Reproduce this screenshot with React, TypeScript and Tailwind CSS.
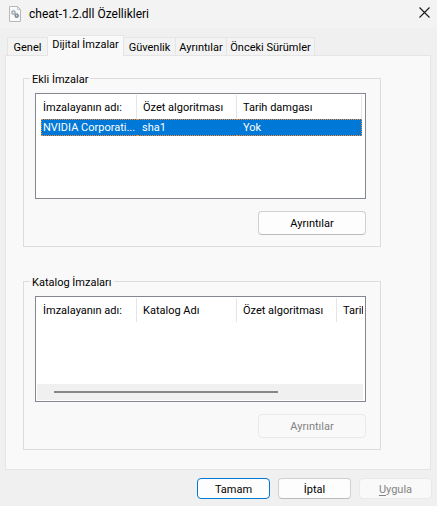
import { useState } from "react";

const tabs = ["Genel", "Dijital İmzalar", "Güvenlik", "Ayrıntılar", "Önceki Sürümler"];
const tabWidths = ["w-[41px]", "w-[76px]", "w-[52px]", "w-[51px]", "w-[88px]"];

const buttonBase =
  "flex items-center justify-center rounded border bg-[#fdfdfd] pt-[2px] border-[#d0d0d0] border-b-[#bcbcbc] disabled:bg-[#f9f9f9] disabled:border-[#e9e9e9] disabled:text-[#838383]";

function HeaderRow({ labels }: { labels: string[] }) {
  return (
    <thead>
      <tr className="h-6">
        {labels.map((label) => (
          <th
            key={label}
            scope="col"
            className="whitespace-nowrap border-r border-[#e5e5e5] p-0 pl-[6px] pt-[2px] text-left font-normal"
          >
            {label}
          </th>
        ))}
      </tr>
    </thead>
  );
}

function AttachedList() {
  return (
    <div className="mt-2 h-[106px] overflow-hidden border border-[#828790] bg-white p-px">
      <table className="w-[325px] table-fixed border-separate border-spacing-0">
        <colgroup>
          <col className="w-[100px]" />
          <col className="w-[100px]" />
          <col className="w-[125px]" />
        </colgroup>
        <HeaderRow labels={["İmzalayanın adı:", "Özet algoritması", "Tarih damgası"]} />
        <tbody className="text-white">
          <tr>
            <td className="p-0">
              <div className="ml-1 h-[17px] whitespace-nowrap border-y border-l border-dotted border-[#ff8728] bg-[#0078d7] pl-px leading-4">
                NVIDIA Corporati...
              </div>
            </td>
            <td className="p-0">
              <div className="h-[17px] border-y border-dotted border-[#ff8728] bg-[#0078d7] pl-[5px] leading-4">sha1</div>
            </td>
            <td className="p-0">
              <div className="h-[17px] border-y border-r border-dotted border-[#ff8728] bg-[#0078d7] pl-[6px] leading-4">
                Yok
              </div>
            </td>
          </tr>
        </tbody>
      </table>
    </div>
  );
}

function CatalogList() {
  return (
    <div className="mt-2 flex h-[106px] flex-col justify-between border border-[#828790] bg-white p-px pr-[2px]">
      <div className="overflow-hidden">
        <table className="w-[400px] table-fixed border-separate border-spacing-0">
          <HeaderRow labels={["İmzalayanın adı:", "Katalog Adı", "Özet algoritması", "Tarih damgası"]} />
        </table>
      </div>
      <div className="flex h-4 items-center bg-[#f0f0f0] pl-[17px]">
        <div className="h-[2px] w-[224px] bg-[#868686]" />
      </div>
    </div>
  );
}

function FileIcon() {
  return (
    <svg width="12" height="16" viewBox="0 0 12 16" fill="none" aria-hidden="true">
      <path d="M.5 .5H8.5L11.5 3.5V15.5H.5Z" fill="#fafafa" stroke="#b8b8b8" />
      <path d="M8.5 .5V3.5H11.5" stroke="#c4c4c4" />
      <circle cx="4.5" cy="6.5" r="1.5" stroke="#a3afb8" strokeWidth="1.6" />
      <circle cx="4.5" cy="6.5" r="2.3" stroke="#a3afb8" strokeWidth=".6" strokeDasharray="1 .8" />
      <circle cx="7.7" cy="9.7" r="1.4" stroke="#84909a" strokeWidth="1.6" />
      <circle cx="7.7" cy="9.7" r="2.1" stroke="#84909a" strokeWidth=".6" strokeDasharray="1 .8" />
    </svg>
  );
}

export default function App() {
  const [active, setActive] = useState(1);
  return (
    <main className="min-h-screen bg-[#f0f0f0] font-[Roboto,sans-serif] text-[11px] leading-[14px] text-black">
      <header className="flex h-7 items-center justify-between bg-[#f3f3f3] pl-[9px] pr-[7px]">
        <div className="flex items-center gap-2">
          <FileIcon />
          <h1 className="text-[12px] leading-4">cheat-1.2.dll Özellikleri</h1>
        </div>
        <button type="button" aria-label="Kapat" className="-mt-1">
          <svg width="11" height="11" viewBox="0 0 11 11" stroke="#1a1a1a" strokeWidth="1.1" aria-hidden="true">
            <path d="M.5 .5L10.5 10.5M10.5 .5L.5 10.5" />
          </svg>
        </button>
      </header>

      <div role="tablist" className="flex h-[27px] items-end pl-[7px]">
        {tabs.map((tab, i) => (
          <button
            key={tab}
            type="button"
            role="tab"
            aria-selected={i === active}
            onClick={() => setActive(i)}
            className={`${tabWidths[i]} shrink-0 whitespace-nowrap border-r border-t border-[#e5e5e5] ${
              i === active ? "relative -mb-px h-[21px] bg-[#f9f9f9] pb-[2px]" : "h-[18px] bg-[#f3f3f3] pt-[2px]"
            } ${i === 0 ? "border-l" : ""}`}
          >
            {tab}
          </button>
        ))}
      </div>

      <section role="tabpanel" className="ml-[5px] mr-[6px] border border-[#e5e5e5] bg-[#f9f9f9] pb-[19px] pl-[17px] pr-[49px] pt-4">
        <fieldset className="min-w-0 border border-[#dcdcdc] pb-[11px] pl-[11px] pr-[14px]">
          <legend className="-ml-[5px] h-[13px] px-[2px] leading-4">Ekli İmzalar</legend>
          <AttachedList />
          <div className="mt-3 flex justify-end">
            <button type="button" className={`${buttonBase} h-6 w-[108px]`}>
              Ayrıntılar
            </button>
          </div>
        </fieldset>

        <fieldset className="mt-7 min-w-0 border border-[#dcdcdc] pb-[11px] pl-[11px] pr-[14px]">
          <legend className="-ml-[5px] h-[13px] px-[2px] leading-4">Katalog İmzaları</legend>
          <CatalogList />
          <div className="mt-3 flex justify-end">
            <button type="button" disabled className={`${buttonBase} h-6 w-[108px]`}>
              Ayrıntılar
            </button>
          </div>
        </fieldset>
      </section>

      <footer className="flex justify-end gap-2 pb-[7px] pr-[5px] pt-2">
        <button
          type="button"
          className="flex h-[21px] w-[73px] items-center justify-center rounded border border-[#0078d4] bg-[#fdfdfd] pt-[2px]"
        >
          Tamam
        </button>
        <button type="button" className={`${buttonBase} h-[21px] w-[73px]`}>
          İptal
        </button>
        <button type="button" disabled className={`${buttonBase} h-[21px] w-[73px]`}>
          <span className="underline underline-offset-2">U</span>ygula
        </button>
      </footer>
    </main>
  );
}
